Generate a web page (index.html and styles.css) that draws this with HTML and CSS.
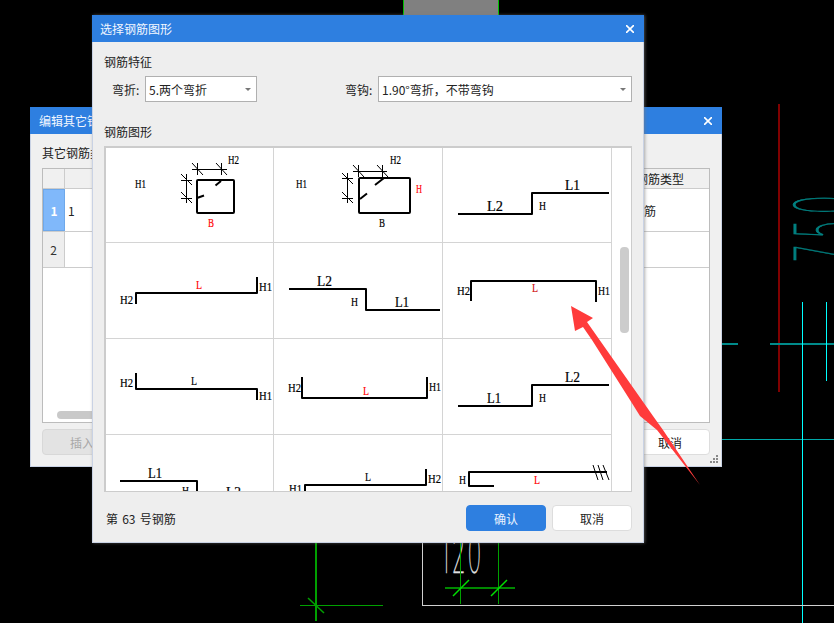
FILE: index.html
```html
<!DOCTYPE html>
<html lang="zh">
<head>
<meta charset="utf-8">
<title>选择钢筋图形</title>
<link rel="stylesheet" href="styles.css">
</head>
<body>
<div class="desktop">
  <svg class="cad" viewBox="0 0 834 623" width="834" height="623">
    <rect x="403" y="0" width="96" height="15" fill="#808080"/>
    <path class="crisp" d="M403.5 0V15M498.5 0V15" stroke="#00c000" fill="none"/>
    <path class="crisp" d="M779 104V392" stroke="#800000" stroke-width="2" fill="none"/>
    <text class="cad-text" transform="translate(854 262) rotate(-90) scale(.38 1)">750</text>
    <path class="crisp" d="M722 344H738M770 344H834" stroke="#008b8b" stroke-width="2" fill="none"/>
    <path class="crisp" d="M722 439.5H834" stroke="#00a8a8" fill="none"/>
    <path class="crisp" d="M802.5 302V623M826.5 302V381" stroke="#00ffff" fill="none"/>
    <path class="crisp" d="M316 540V621M300 605.5H383" stroke="#00a000" stroke-width="1.5" fill="none"/>
    <path d="M308 598L324 613" stroke="#00a000" stroke-width="1.5" fill="none"/>
    <path class="crisp" d="M422.5 540V605.5H834" stroke="#d0d0d0" fill="none"/>
    <text class="cad-num" transform="translate(441 573) scale(.75 1.8)">120</text>
    <path class="crisp" d="M445 588H515" stroke="#008800" stroke-width="2" fill="none"/>
    <path class="crisp" d="M460.5 540V604M498.5 540V604" stroke="#00a000" stroke-width="1.5" fill="none"/>
    <path d="M453 596L469 580M491 596L507 580" stroke="#00e000" stroke-width="1.5" fill="none"/>
  </svg>

  <section class="win win-back">
    <header class="titlebar">
      <span class="title">编辑其它钢筋</span>
      <svg class="close" viewBox="0 0 8 8"><path d="M0 0L8 8M8 0L0 8"/></svg>
    </header>
    <div class="back-body">
      <div class="heading">其它钢筋类型</div>
      <div class="table">
        <div class="tr tr-head"><div class="td th-corner"></div><div class="td"></div><div class="td td-type">钢筋类型</div></div>
        <div class="tr tr-one"><div class="td rowhead rowhead-on">1</div><div class="td td-val">1</div><div class="td td-bar">钢筋</div></div>
        <div class="tr tr-two"><div class="td rowhead">2</div><div class="td"></div><div class="td"></div></div>
        <div class="hthumb"></div>
      </div>
      <div class="back-actions">
        <button class="btn btn-disabled">插入</button>
        <button class="btn">取消</button>
      </div>
    </div>
    <svg class="grip" viewBox="0 0 8 8" width="8" height="8"><path d="M6 0h2v2H6zM3 3h2v2H3zM6 3h2v2H6zM0 6h2v2H0zM3 6h2v2H3zM6 6h2v2H6z" fill="#888"/></svg>
  </section>

  <section class="win win-main">
    <header class="titlebar">
      <span class="title">选择钢筋图形</span>
      <svg class="close" viewBox="0 0 8 8"><path d="M0 0L8 8M8 0L0 8"/></svg>
    </header>
    <div class="main-body">
      <div class="heading">钢筋特征</div>
      <div class="feature-row">
        <label class="field-label">弯折:</label>
        <div class="combo combo-bend"><span>5.两个弯折</span><i class="caret"></i></div>
        <label class="field-label field-hook">弯钩:</label>
        <div class="combo combo-hook"><span>1.90°弯折，不带弯钩</span><i class="caret"></i></div>
      </div>
      <div class="heading heading-shape">钢筋图形</div>
      <div class="frame">
        <div class="shapes">
          <div class="cell"><svg viewBox="106 148 167 94">
            <text class="t" x="135" y="188" textLength="11" lengthAdjust="spacingAndGlyphs">H1</text><text class="t" x="228" y="164" textLength="11" lengthAdjust="spacingAndGlyphs">H2</text>
            <rect class="bar" x="197" y="180" width="37" height="33" rx="1"/>
            <path class="thin" d="M192 169.500H227M197.500 163V175M221.500 163V175M192 163L203 175M216 163L227 175M186.500 174V203M181 180.500H192M181 198.500H192M181 174L192 185M181 192L192 203"/>
            <path class="bar" d="M215.500 185.500L221 181M197 198L204 195.500"/>
            <text class="t red" x="208" y="227" textLength="6" lengthAdjust="spacingAndGlyphs">B</text>
          </svg></div>
          <div class="cell"><svg viewBox="274 148 168 94">
            <text class="t" x="296" y="188" textLength="11" lengthAdjust="spacingAndGlyphs">H1</text><text class="t" x="390" y="164" textLength="11" lengthAdjust="spacingAndGlyphs">H2</text>
            <rect class="bar" x="359" y="178" width="51" height="35" rx="1"/>
            <path class="thin" d="M353 171.500H387M358.500 165V177M382.500 165V177M353 165L364 177M377 165L388 177M347.500 173V203M342 178.500H353M342 198.500H353M342 173L353 184M342 192L353 203"/>
            <path class="bar" d="M375 185L384 178M360 199L367 193.500"/>
            <text class="t red" x="416" y="193" textLength="6" lengthAdjust="spacingAndGlyphs">H</text><text class="t" x="379" y="227" textLength="6" lengthAdjust="spacingAndGlyphs">B</text>
          </svg></div>
          <div class="cell"><svg viewBox="443 148 168 94">
            <path class="bar" d="M458 214H532V193H609"/>
            <text class="t lg" x="487" y="211" textLength="16" lengthAdjust="spacingAndGlyphs">L2</text><text class="t lg" x="565" y="190" textLength="15" lengthAdjust="spacingAndGlyphs">L1</text><text class="t" x="539" y="210" textLength="7" lengthAdjust="spacingAndGlyphs">H</text>
          </svg></div>

          <div class="cell"><svg viewBox="106 243 167 95">
            <path class="bar" d="M136 304V293H257V277"/>
            <text class="t" x="120" y="304" textLength="13" lengthAdjust="spacingAndGlyphs">H2</text><text class="t red" x="196" y="289" textLength="6" lengthAdjust="spacingAndGlyphs">L</text><text class="t" x="259" y="291" textLength="13" lengthAdjust="spacingAndGlyphs">H1</text>
          </svg></div>
          <div class="cell"><svg viewBox="274 243 168 95">
            <path class="bar" d="M289 289H366V310H440"/>
            <text class="t lg" x="317" y="286" textLength="15" lengthAdjust="spacingAndGlyphs">L2</text><text class="t" x="351" y="306" textLength="7" lengthAdjust="spacingAndGlyphs">H</text><text class="t lg" x="395" y="307" textLength="14" lengthAdjust="spacingAndGlyphs">L1</text>
          </svg></div>
          <div class="cell"><svg viewBox="443 243 168 95">
            <path class="bar" d="M471 301V281H596V302"/>
            <text class="t" x="457" y="295" textLength="13" lengthAdjust="spacingAndGlyphs">H2</text><text class="t dark-red" x="532" y="292" textLength="6" lengthAdjust="spacingAndGlyphs">L</text><text class="t" x="598" y="295" textLength="12" lengthAdjust="spacingAndGlyphs">H1</text>
          </svg></div>

          <div class="cell"><svg viewBox="106 339 167 95">
            <path class="bar" d="M136 373V389H257V400"/>
            <text class="t" x="120" y="387" textLength="13" lengthAdjust="spacingAndGlyphs">H2</text><text class="t" x="191" y="385" textLength="6" lengthAdjust="spacingAndGlyphs">L</text><text class="t" x="259" y="400" textLength="13" lengthAdjust="spacingAndGlyphs">H1</text>
          </svg></div>
          <div class="cell"><svg viewBox="274 339 168 95">
            <path class="bar" d="M302 377V398H427V377"/>
            <text class="t" x="288" y="392" textLength="13" lengthAdjust="spacingAndGlyphs">H2</text><text class="t red" x="363" y="395" textLength="6" lengthAdjust="spacingAndGlyphs">L</text><text class="t" x="429" y="391" textLength="12" lengthAdjust="spacingAndGlyphs">H1</text>
          </svg></div>
          <div class="cell"><svg viewBox="443 339 168 95">
            <path class="bar" d="M458 406H532V385H609"/>
            <text class="t lg" x="487" y="403" textLength="14" lengthAdjust="spacingAndGlyphs">L1</text><text class="t lg" x="565" y="382" textLength="15" lengthAdjust="spacingAndGlyphs">L2</text><text class="t" x="539" y="402" textLength="7" lengthAdjust="spacingAndGlyphs">H</text>
          </svg></div>

          <div class="cell"><svg viewBox="106 435 167 95">
            <path class="bar" d="M120 481H197V510"/>
            <text class="t lg" x="148" y="478" textLength="14" lengthAdjust="spacingAndGlyphs">L1</text><text class="t" x="182" y="495" textLength="7" lengthAdjust="spacingAndGlyphs">H</text><text class="t lg" x="226" y="497" textLength="15" lengthAdjust="spacingAndGlyphs">L2</text>
          </svg></div>
          <div class="cell"><svg viewBox="274 435 168 95">
            <path class="bar" d="M305 510V485H426V469"/>
            <text class="t" x="289" y="493" textLength="13" lengthAdjust="spacingAndGlyphs">H1</text><text class="t" x="365" y="481" textLength="6" lengthAdjust="spacingAndGlyphs">L</text><text class="t" x="428" y="483" textLength="13" lengthAdjust="spacingAndGlyphs">H2</text>
          </svg></div>
          <div class="cell"><svg viewBox="443 435 168 95">
            <path class="bar" d="M494 486H469V472H607"/>
            <path class="thin" d="M593 465L598 480M598 465L603 480M603 465L609 480"/>
            <text class="t" x="459" y="484" textLength="7" lengthAdjust="spacingAndGlyphs">H</text><text class="t red" x="534" y="484" textLength="6" lengthAdjust="spacingAndGlyphs">L</text>
          </svg></div>
        </div>
        <div class="vscroll"><div class="vthumb"></div></div>
      </div>
      <div class="footer">
        <span class="status">第 63 号钢筋</span>
        <div class="actions">
          <button class="btn btn-primary">确认</button>
          <button class="btn">取消</button>
        </div>
      </div>
    </div>
  </section>

  <svg class="arrow" viewBox="0 0 834 623" width="834" height="623">
    <polygon points="571,306 593,318 587,322 653,416 663,430 700,485 657,430 640,416 630,400 592,340 583,327 575,331" fill="#ff3b3b"/>
  </svg>
</div>
</body>
</html>
```

FILE: styles.css
```css
* { box-sizing: border-box; }
html, body { margin: 0; padding: 0; background: #000; }
body { font-family: "Noto Sans CJK SC", "Liberation Sans", sans-serif; font-size: 12px; color: #222; }
.desktop { position: relative; width: 834px; height: 623px; overflow: hidden; background: #000; }
.cad, .arrow { position: absolute; left: 0; top: 0; display: block; }
.arrow { pointer-events: none; }
.crisp { shape-rendering: crispEdges; }
.cad-text { font-family: Inter, "Liberation Sans", sans-serif; font-weight: 100; font-size: 82px; letter-spacing: 18px; fill: #008080; stroke: #008080; stroke-width: .8px; vector-effect: non-scaling-stroke; }
.cad-num { font-family: Inter, "Liberation Sans", sans-serif; font-weight: 100; font-size: 30px; letter-spacing: 3px; fill: #e0e0e0; stroke: #e0e0e0; stroke-width: .5px; vector-effect: non-scaling-stroke; }

.win { position: absolute; display: flex; flex-direction: column; background: #eee; border: 1px solid #c9d2e4; border-top: 0; }
.win-back { left: 30px; top: 107px; width: 692px; height: 360px; background: #f0f0f0; }
.win-main { left: 92px; top: 15px; width: 552px; height: 528px; box-shadow: 1px 0 3px rgba(120,120,120,.6); }

.titlebar { flex: none; display: flex; align-items: center; justify-content: space-between; height: 27px; margin: 0 -1px; padding: 0 10px 0 8px; background: #2e7fe0; color: #fff; }
.title { line-height: 16px; color: #f2f7ff; }
.win-back .title { margin-left: 1px; }
.close { width: 8px; height: 8px; display: block; }
.close path { stroke: #fff; stroke-width: 1.6; fill: none; }

.heading { height: 16px; line-height: 16px; }

.back-body { flex: 1; padding: 11px 11px 0; }
.table { position: relative; height: 255px; margin-top: 7px; background: #fff; border: 1px solid #bcbcbc; }
.tr { display: grid; grid-template-columns: 22px 567px 1fr; border-bottom: 1px solid #ccc; }
.tr-head { height: 20px; background: #f0f0f0; }
.tr-one { height: 43px; }
.tr-two { height: 36px; }
.td { display: flex; align-items: center; min-width: 0; white-space: nowrap; }
.tr-head .td:first-child { border-right: 1px solid #ccc; }
.td-type { padding-left: 4px; }
.td-val { padding-left: 3px; }
.rowhead { justify-content: center; background: #eee; border-right: 1px solid #ccc; color: #333; }
.rowhead-on { background: #80b8fa; border: 1px solid #6ea8ea; color: #fff; font-weight: 700; }
.hthumb { position: absolute; left: 14px; bottom: 3px; width: 500px; height: 8px; border-radius: 4px; background: #c9c9c9; }
.back-actions { display: flex; justify-content: space-between; margin-top: 6px; }
.grip { position: absolute; right: 3px; bottom: 3px; display: block; }

.btn { width: 80px; height: 26px; padding: 0; font: inherit; color: #222; background: #fff; border: 1px solid #ddd; border-radius: 4px; }
.btn-primary { background: #2e7fe0; border-color: #2e7fe0; color: #eaf3ff; }
.btn-disabled { background: #e3e3e3; border-color: #d8d8d8; color: #a8a8a8; }

.main-body { flex: 1; display: flex; flex-direction: column; padding: 12px 11px 0; min-height: 0; }
.feature-row { display: flex; align-items: center; height: 26px; margin-top: 6px; padding-left: 8px; }
.field-label { width: 33px; flex: none; }
.field-hook { margin-left: 88px; }
.combo { position: relative; display: flex; align-items: center; height: 26px; padding-left: 3px; background: #fff; border: 1px solid #b0b0b0; }
.combo-bend { width: 112px; flex: none; }
.combo-hook { flex: 1; }
.caret { position: absolute; right: 5px; top: 11px; width: 0; height: 0; border-left: 3px solid transparent; border-right: 3px solid transparent; border-top: 3px solid #777; }
.heading-shape { margin-top: 22px; }

.frame { flex: none; display: flex; height: 346px; margin-top: 6px; background: #fff; border: solid #ccc; border-width: 2px 1px 1px 2px; overflow: hidden; }
.shapes { flex: none; width: 506px; height: 343px; display: grid; grid-template-columns: 168px 169px 169px; grid-template-rows: 95px 96px 96px 96px; overflow: hidden; }
.cell { border-right: 1px solid #d4d4d4; border-bottom: 1px solid #d4d4d4; min-width: 0; min-height: 0; }
.cell svg { display: block; width: 100%; height: 100%; overflow: hidden; opacity: .999; }
.t { font-family: "Liberation Serif", serif; font-size: 13px; fill: #000; stroke: #000; stroke-width: .2px; }
.lg { font-size: 15px; }
.red { fill: #f00; stroke: #f00; }
.dark-red { fill: #d01010; stroke: #d01010; }
.bar { fill: none; stroke: #000; stroke-width: 2; stroke-linejoin: round; }
.thin { fill: none; stroke: #000; stroke-width: 1; }
.vscroll { flex: 1; position: relative; }
.vthumb { position: absolute; left: 8px; top: 99px; width: 9px; height: 86px; border-radius: 4px; background: #ccc; }

.footer { flex: 1; display: flex; justify-content: space-between; align-items: flex-start; padding-top: 13px; }
.status { padding-left: 2px; line-height: 28px; word-spacing: 1.5px; }
.actions { display: flex; gap: 6px; }
```
